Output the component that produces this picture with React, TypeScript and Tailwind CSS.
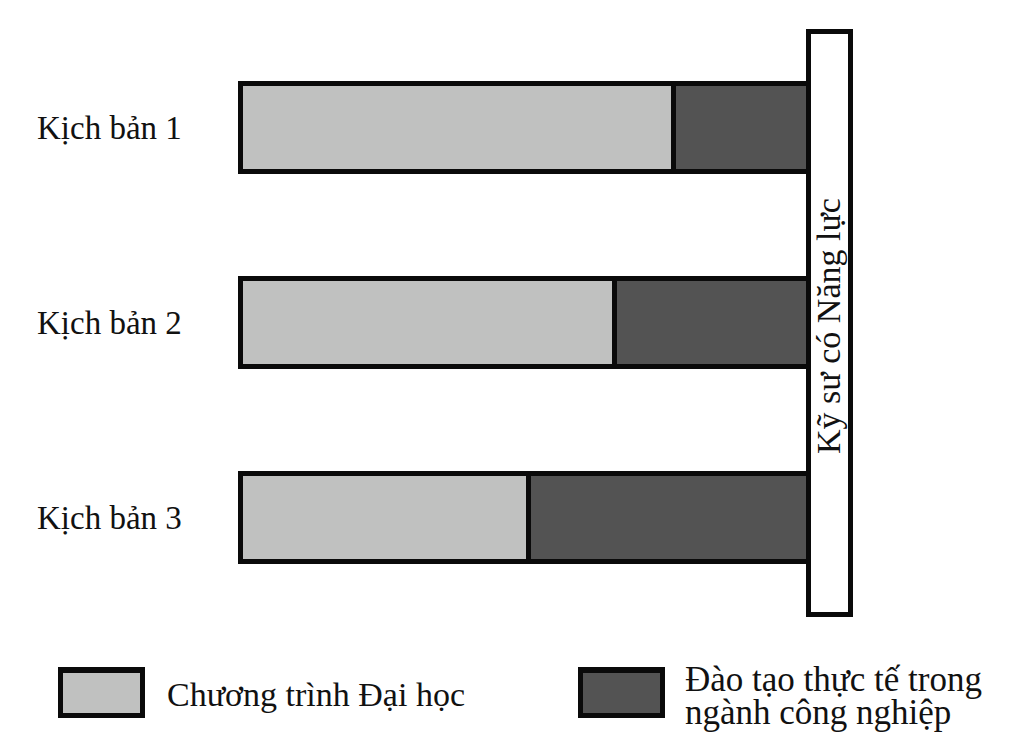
import React from "react";

const bars = [
  { label: "Kịch bản 1", light: 428, dark: 130 },
  { label: "Kịch bản 2", light: 369, dark: 189 },
  { label: "Kịch bản 3", light: 283, dark: 275 },
];

export default function App() {
  return (
    <div
      className="w-[1024px] h-[752px] bg-white text-[#111] overflow-hidden"
      style={{ fontFamily: '"Liberation Serif", "Times New Roman", serif' }}
    >
      <div className="flex pt-[29px]">
        <div className="flex flex-col pt-[52px] gap-[102px]">
          {bars.map((b) => (
            <div key={b.label} className="flex items-center h-[93px]">
              <div className="w-[238px] pl-[37px] text-[33px] leading-[36px] whitespace-nowrap">
                {b.label}
              </div>
              <div className="flex h-[93px] w-[568px] border-[5px] border-r-0 border-[#0a0a0a]">
                <div className="bg-[#c0c1c0] border-r-[5px] border-[#0a0a0a]" style={{ width: b.light + 5 }} />
                <div className="bg-[#535353]" style={{ width: b.dark }} />
              </div>
            </div>
          ))}
        </div>
        <div className="w-[47px] h-[588px] border-[5px] border-[#0a0a0a] bg-white flex items-center justify-center">
          <span className="-rotate-90 whitespace-nowrap text-[34px] leading-[38px] translate-y-[3px] translate-x-[-1px]">
            Kỹ sư có Năng lực
          </span>
        </div>
      </div>
      <div className="flex mt-[47px]">
        <div className="flex items-start pl-[58px] w-[578px]">
          <div className="mt-[3px] w-[87px] h-[51px] border-[5px] border-t-[6px] border-[#0a0a0a] bg-[#c0c1c0]" />
          <div className="ml-[22px] mt-[15px] text-[34px] leading-[32px] whitespace-nowrap">
            Chương trình Đại học
          </div>
        </div>
        <div className="flex items-start">
          <div className="mt-[3px] w-[87px] h-[51px] border-[5px] border-t-[6px] border-[#0a0a0a] bg-[#535353]" />
          <div className="ml-[20px] mt-[-1px] flex flex-col text-[35px] leading-[33px] whitespace-nowrap">
            <span className="block h-[33px]">Đào tạo thực tế trong</span>
            <span className="block h-[33px]">ngành công nghiệp</span>
          </div>
        </div>
      </div>
    </div>
  );
}
